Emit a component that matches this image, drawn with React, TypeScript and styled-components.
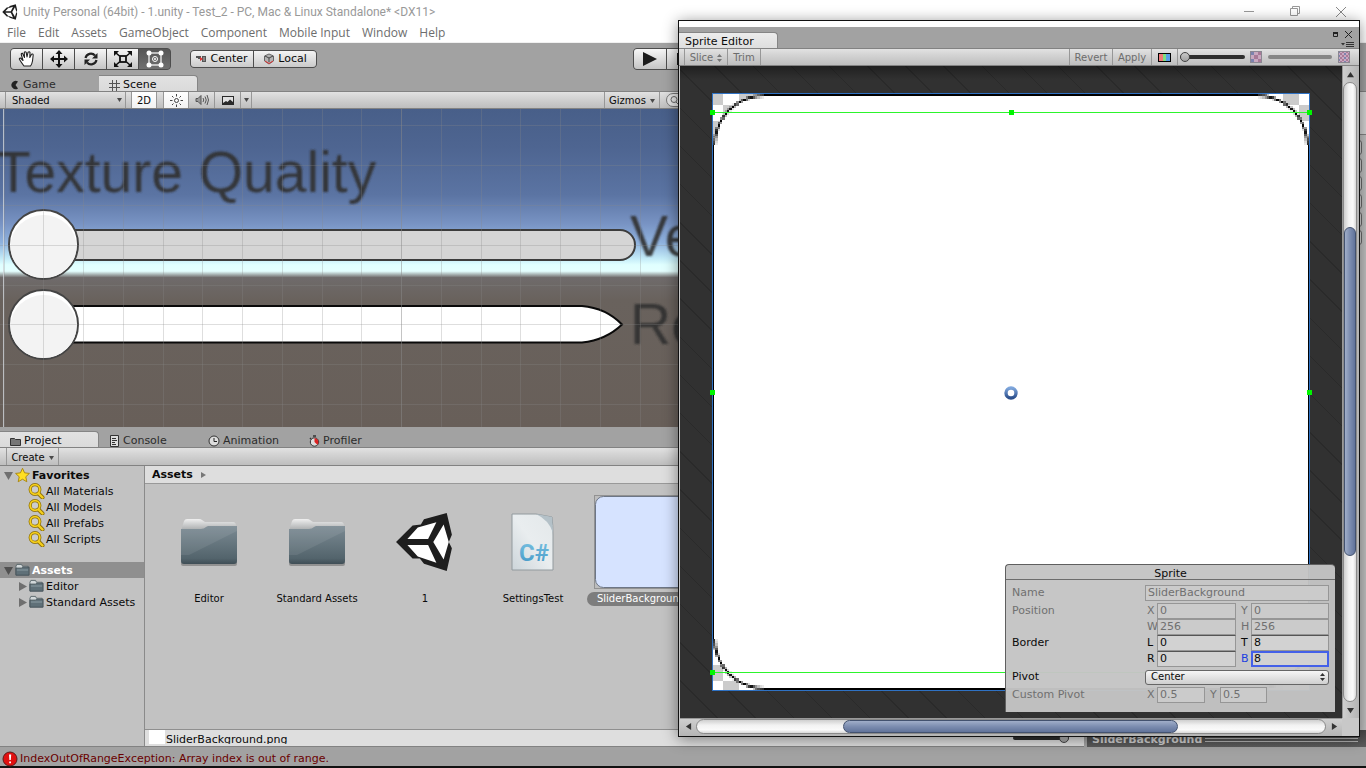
import React from "react";
import styled, { createGlobalStyle, css } from "styled-components";

const GlobalStyle = createGlobalStyle`
  *, *::before, *::after { box-sizing: border-box; }
  body {
    margin: 0;
    background: #a2a2a2;
    color: #0a0a0a;
    font: 11px/16px "DejaVu Sans", Verdana, sans-serif;
    overflow: hidden;
  }
  button, input, select { font: inherit; color: inherit; margin: 0; }
  button { padding: 0; border: 0; background: none; }
  svg { display: block; flex: none; }
`;

const barFill = "linear-gradient(#e2e2e2, #d6d6d6 30%, #bebebe)";

/* ---------- shell ---------- */

const Shell = styled.div`
  position: relative;
  display: flex;
  flex-direction: column;
  min-height: 100vh;
  overflow: hidden;
`;

const TitleBar = styled.header`
  display: flex;
  align-items: center;
  height: 23px;
  padding: 0 2px;
  background: #fff;
  color: #999;
  font: 12px/16px Roboto, "Segoe UI", sans-serif;
`;

const TitleText = styled.h1`
  flex: 1;
  margin: 0 0 0 5px;
  font: inherit;
`;

const CaptionButton = styled.button`
  display: grid;
  place-items: center;
  width: 46px;
  height: 22px;
  color: #999;
`;

const MenuBar = styled.nav`
  display: flex;
  gap: 12px;
  height: 20px;
  padding: 1px 0 1px 7px;
  background: #fff;
  border-bottom: 1px solid #f0f0f0;
  color: #6d6d6d;
  font: 12px/16px "Open Sans", "Segoe UI", sans-serif;
`;

const MainToolbar = styled.div`
  display: grid;
  grid-template-columns: 1fr auto 1fr;
  align-items: center;
  height: 32px;
  padding: 0 10px;
  background: #a2a2a2;
`;

const ToolSide = styled.div`
  display: flex;
  align-items: center;
  gap: 19px;
`;

const ButtonGroup = styled.div`
  display: flex;
  border: 1px solid #4d4d4d;
  border-radius: 4px;
  overflow: hidden;
  background: #4d4d4d;
  gap: 1px;
`;

const ToolButton = styled.button<{ $on?: boolean; $wide?: boolean }>`
  display: grid;
  place-items: center;
  width: ${(p) => (p.$wide ? 32 : 31)}px;
  height: 20px;
  background: ${(p) => (p.$on ? "linear-gradient(#565656, #707070)" : "linear-gradient(#f6f6f6, #c4c4c4)")};
`;

const PivotButton = styled.button`
  display: flex;
  align-items: center;
  justify-content: center;
  gap: 3px;
  width: 62px;
  height: 16px;
  line-height: 16px;
  background: linear-gradient(#f4f4f4, #cacaca);
`;

/* ---------- docks ---------- */

const Workspace = styled.div`
  display: flex;
  flex: 1;
`;

const LeftColumn = styled.div`
  display: flex;
  flex-direction: column;
  flex: 1;
  min-width: 0;
`;

const Dock = styled.section<{ $grow?: boolean }>`
  display: flex;
  flex-direction: column;
  ${(p) => p.$grow && css`flex: 1;`}
`;

const TabStrip = styled.div`
  display: flex;
  align-items: flex-end;
  height: 17px;
  background: #a2a2a2;
  border-bottom: 1px solid #828282;
`;

const DockTab = styled.button<{ $active?: boolean }>`
  display: flex;
  align-items: center;
  gap: 3px;
  width: 99px;
  height: 16px;
  padding: 3px 0 0 10px;
  color: ${(p) => (p.$active ? "#0a0a0a" : "#2c2c2c")};
  line-height: 14px;
  white-space: nowrap;
  ${(p) =>
    p.$active &&
    css`
      background: linear-gradient(#e2e2e2, #dadada);
      border: solid #858585;
      border-width: 1px 1px 0 0;
      border-radius: 0 4px 0 0;
    `}
`;

const Bar = styled.div<{ $indent?: number; $tall?: boolean }>`
  display: flex;
  align-items: stretch;
  height: ${(p) => (p.$tall ? 18 : 17)}px;
  padding-left: ${(p) => p.$indent ?? 5}px;
  background: ${barFill};
  border-bottom: 1px solid #828282;
  font-size: 10px;
  line-height: 14px;
`;

const BarButton = styled.button<{ $width: number; $on?: boolean; $dim?: boolean; $left?: boolean }>`
  display: flex;
  align-items: center;
  justify-content: center;
  gap: 4px;
  width: ${(p) => p.$width}px;
  padding-top: ${(p) => (p["aria-label"] ? 0 : 2)}px;
  border-right: 1px solid #979797;
  ${(p) => p.$left && css`border-left: 1px solid #979797;`}
  ${(p) => p.$on && css`background: linear-gradient(#fff, #f2f2f2);`}
  ${(p) => p.$dim && css`color: #6c6c6c;`}
`;

const Spacer = styled.div<{ $width?: number }>`
  ${(p) => (p.$width ? css`width: ${p.$width}px;` : css`flex: 1;`)}
`;

const SelectBox = styled.div<{ $width?: number }>`
  display: grid;
  align-items: center;
  ${(p) => p.$width && css`width: ${p.$width}px;`}
  > * { grid-area: 1 / 1; }
  > svg { justify-self: end; margin-right: 4px; pointer-events: none; }
`;

const BarSelect = styled.select`
  appearance: none;
  width: 100%;
  height: 16px;
  padding: 1px 0 0 6px;
  border: solid #979797;
  border-width: 0 1px;
  border-radius: 0;
  background: none;
`;

const SearchWrap = styled.div`
  display: flex;
  width: 424px;
  padding: 1px 6px;
`;

const SearchField = styled.input`
  flex: 1;
  min-width: 0;
  height: 14px;
  padding: 0 16px;
  border: 1px solid #777;
  border-radius: 7px;
  background: #e4e4e4;
`;

const SearchGlyph = styled.svg`
  width: 16px;
  margin: 0 -16px 0 0;
  z-index: 1;
`;

const SceneView = styled.div`
  height: 322px;
  overflow: hidden;
  background: #a2a2a2;
`;

/* ---------- project browser ---------- */

const Browser = styled.div`
  display: flex;
  flex: 1;
  border-bottom: 1px solid #828282;
`;

const Tree = styled.ul`
  width: 145px;
  margin: 0;
  padding: 1px 0 0;
  list-style: none;
  background: #c2c2c2;
  border-right: 1px solid #8a8a8a;
`;

const TreeRow = styled.li<{ $depth: number; $head?: boolean; $selected?: boolean; $gap?: boolean }>`
  display: flex;
  align-items: center;
  gap: ${(p) => (p.$head || !p.$depth ? 2 : 1)}px;
  height: 16px;
  margin-top: ${(p) => (p.$gap ? 15 : 0)}px;
  padding-left: ${(p) => (p.$depth ? (p.$head ? 18 : 28) : 4)}px;
  line-height: 17px;
  white-space: nowrap;
  ${(p) => !p.$depth && css`font-weight: bold;`}
  ${(p) => p.$selected && css`background: #8f8f8f; color: #fff;`}
`;

const Listing = styled.div`
  display: flex;
  flex-direction: column;
  flex: 1;
  min-width: 0;
  background: #c2c2c2;
`;

const Crumbs = styled.div`
  display: flex;
  align-items: center;
  gap: 8px;
  height: 18px;
  padding: 1px 0 0 7px;
  background: #dedede;
  border-bottom: 1px solid #999;
  font-weight: bold;
`;

const AssetGrid = styled.div`
  display: flex;
  flex: 1;
  padding: 11px 10px 0;
`;

const Asset = styled.figure`
  display: flex;
  flex-direction: column;
  align-items: center;
  width: 108px;
  margin: 0;
`;

const AssetArt = styled.div`
  display: grid;
  place-items: center;
  width: 94px;
  height: 94px;
`;

const AssetName = styled.figcaption<{ $selected?: boolean }>`
  height: 14px;
  margin-top: 3px;
  padding: 0 10px;
  border-radius: 7px;
  font-size: 10px;
  line-height: 14px;
  white-space: nowrap;
  ${(p) => p.$selected && css`background: #7d7d7d; color: #fff;`}
`;

const PathBar = styled.div`
  display: flex;
  height: 17px;
  padding-left: 4px;
  overflow: hidden;
  background: #dedede;
  border-top: 1px solid #8f8f8f;
`;

const Swatch = styled.span`
  width: 16px;
  height: 14px;
  margin: 0 1px 0 0;
  background: #fff;
`;

const PathText = styled.span`
  flex: 1;
  height: 14px;
  overflow: hidden;
  line-height: 19px;
`;

/* ---------- inspector strip ---------- */

const Inspector = styled.aside`
  display: flex;
  flex-direction: column;
  width: 282px;
  background: #c2c2c2;
  border-left: 3px solid #a2a2a2;
`;

const InspectorHead = styled.div`
  height: 43px;
  background: #d6d6d6;
  border-bottom: 1px solid #858585;
`;

const InspectorRows = styled.div`
  display: flex;
  flex-direction: column;
  gap: 3px;
  flex: 1;
  padding: 5px 4px 0;
`;

const InspectorRow = styled.div`
  height: 15px;
  border: 1px solid #6b6b6b;
  border-radius: 3px;
  background: #d8d8d8;
`;

const PreviewHead = styled.div`
  display: flex;
  align-items: center;
  gap: 3px;
  height: 17px;
  padding: 2px 8px 0 5px;
  background: linear-gradient(#4a4a4a, #5c5c5c);
  color: #d0d0d0;
  font-weight: bold;
`;

const Grip = styled.span`
  flex: 1;
  height: 4px;
  border: solid #b4b4b4;
  border-width: 1px 0;
`;

const StatusBar = styled.footer`
  display: flex;
  align-items: center;
  gap: 1px;
  height: 21px;
  padding: 4px 0 0 2px;
  border-bottom: 2px solid #111;
  background: #a2a2a2;
  color: #6a0000;
  line-height: 17px;
`;

/* ---------- sprite editor window ---------- */

const EditorWindow = styled.section`
  position: absolute;
  z-index: 2;
  top: 20px;
  right: 6px;
  bottom: 31px;
  left: 678px;
  display: flex;
  flex-direction: column;
  border: 1px solid #111;
  background: #c8c8c8;
  box-shadow: 0 2px 14px rgba(0, 0, 0, 0.45);
`;

const WindowTop = styled.div`
  display: flex;
  align-items: flex-end;
  height: 28px;
  padding-right: 1px;
  border-top: 6px solid #fff;
  border-bottom: 1px solid #828282;
  background: #a2a2a2;
`;

const WindowTab = styled.h2`
  width: 99px;
  height: 16px;
  margin: 0;
  padding-left: 6px;
  font: inherit;
  line-height: 17px;
  background: linear-gradient(#ececec, #dedede);
  border: solid #858585;
  border-width: 1px 1px 0 0;
  border-radius: 0 4px 0 0;
`;

const WindowBody = styled.div`
  display: grid;
  flex: 1;
  grid-template: minmax(0, 1fr) 18px / minmax(0, 1fr) 17px;
  padding-left: 1px;
`;

const Stage = styled.div`
  position: relative;
  background:
    linear-gradient(rgba(0, 0, 0, 0.35), transparent 14px),
    repeating-linear-gradient(45deg, #313131 0 26px, #2a2a2a 26px 27px);
`;

const SpriteCanvas = styled.svg`
  position: absolute;
  top: 22px;
  left: 27px;
`;

const Scroll = styled.div<{ $vertical?: boolean }>`
  display: flex;
  flex-direction: ${(p) => (p.$vertical ? "column" : "row")};
  background: ${(p) => (p.$vertical ? "linear-gradient(90deg, #cfcfcf, #b4b4b4)" : "linear-gradient(#cfcfcf, #b4b4b4)")};
  border-${(p) => (p.$vertical ? "left" : "top")}: 1px solid #999;
  padding: ${(p) => (p.$vertical ? "0 2px 0 0" : "0 0 2px")};
`;

const ScrollArrow = styled.button`
  display: grid;
  place-items: center;
  flex: 0 0 16px;
`;

const ScrollTrack = styled.div<{ $vertical?: boolean }>`
  flex: 1;
  display: grid;
  ${(p) => (p.$vertical ? "grid-template-rows" : "grid-template-columns")}: 233fr 533fr 234fr;
  border: 1px solid #8a8a8a;
  border-radius: 8px;
  background: linear-gradient(${(p) => (p.$vertical ? "90deg" : "180deg")}, #cfcfcf, #f2f2f2 40%, #fafafa 75%, #d8d8d8);
`;

const ScrollThumb = styled.div<{ $vertical?: boolean }>`
  grid-area: ${(p) => (p.$vertical ? "2 / 1" : "1 / 2")};
  border: 1px solid #43526f;
  border-radius: 7px;
  background: linear-gradient(${(p) => (p.$vertical ? "90deg" : "180deg")}, #a0aec9, #7c8db0 50%, #61739a);
`;

const Range = styled.input<{ $muted?: boolean; $width: number }>`
  appearance: none;
  align-self: center;
  width: ${(p) => p.$width}px;
  height: 10px;
  background: none;
  &::-webkit-slider-runnable-track {
    height: 4px;
    border-radius: 2px;
    background: ${(p) => (p.$muted ? "#868686" : "#2e2e2e")};
  }
  &::-webkit-slider-thumb {
    appearance: none;
    width: 10px;
    height: 10px;
    margin-top: -3px;
    border: 1px solid #444;
    border-radius: 5px;
    background: linear-gradient(#c8c8c8, #a0a0a0);
    opacity: ${(p) => (p.$muted ? 0 : 1)};
  }
`;

/* ---------- sprite properties ---------- */

const SpritePanel = styled.form`
  position: absolute;
  right: 7px;
  bottom: 6px;
  width: 330px;
  height: 148px;
  border: solid #5f5f5f;
  border-width: 1px 0 0 1px;
  border-radius: 4px 4px 0 0;
  background: rgba(196, 196, 196, 0.97);
`;

const PanelTitle = styled.h3`
  height: 15px;
  margin: 0 0 5px;
  border-bottom: 1px solid #6c6c6c;
  font: inherit;
  line-height: 17px;
  text-align: center;
`;

const PanelRow = styled.div<{ $dim?: boolean; $gap?: boolean; $short?: boolean }>`
  display: grid;
  grid-template-columns: ${(p) => (p.$short ? "133px 12px 48px 15px 47px" : "133px 12px 79px 15px 78px")};
  height: 16px;
  margin: 0 0 ${(p) => (p.$gap ? 2 : 0)}px 6px;
  color: ${(p) => (p.$dim ? "#707070" : "#0a0a0a")};
`;

const AxisLabel = styled.label<{ $second?: boolean; $focus?: boolean }>`
  padding-left: ${(p) => (p.$second ? 5 : 2)}px;
  overflow: hidden;
  ${(p) => p.$focus && css`color: #1c3fe0;`}
`;

const Field = styled.input<{ $wide?: boolean; $focus?: boolean }>`
  ${(p) => p.$wide && css`grid-column: 2 / -1;`}
  min-width: 0;
  width: 100%;
  height: 16px;
  padding: 0 2px;
  border: 1px solid #969696;
  border-top-color: ${(p) => (p.disabled ? "#969696" : "#555")};
  border-radius: 0;
  outline: 0;
  background: #cbcbcb;
  color: inherit;
  ${(p) => !p.disabled && css`background: #d2d2d2;`}
  ${(p) => p.$focus && css`border: 2px solid #4460e8; padding: 0 1px;`}
`;

const PivotSelectBox = styled(SelectBox)`
  grid-column: 2 / -1;
`;

const PivotSelect = styled.select`
  appearance: none;
  width: 100%;
  height: 15px;
  padding: 0 5px;
  border: 1px solid #666;
  border-radius: 3px;
  background: linear-gradient(#f6f6f6, #cfcfcf);
  font-size: 10px;
  line-height: 12px;
`;

/* ---------- icons ---------- */

const Caret = ({ color = "#4a4a4a" }: { color?: string }) => (
  <svg width="5" height="4" viewBox="0 0 5 4"><path d="M0 0h5L2.500 4z" fill={color} /></svg>
);

const UpDown = ({ color = "#333" }: { color?: string }) => (
  <svg width="5" height="8" viewBox="0 0 5 8"><path d="M0 3h5L2.500 0zM0 5h5L2.500 8z" fill={color} /></svg>
);

const UnityLogo = ({ size, lit = "#fff" }: { size: number; lit?: string }) => (
  <svg width={size} height={size} viewBox="0 0 58 58">
    <path d="M1 29 17 13 25 12 28 7 50 1 55 22 52 29 55 35 50 57 28 50 24 45 17 45z" fill="#1e1e1e" />
    <path d="M12 26 22 15 40 10 32 26zM12 32 22 43 40 49 32 32zM37 29 47 12 52 29 47 46z" fill={lit} />
  </svg>
);

const Arrow = ({ dir, size = 7 }: { dir: "up" | "down" | "left" | "right"; size?: number }) => {
  const turn = { up: 0, right: 90, down: 180, left: 270 }[dir];
  return (
    <svg width={size} height={size} viewBox="0 0 8 8">
      <path d="M0 7h8L4 1z" fill="#333" transform={`rotate(${turn} 4 4)`} />
    </svg>
  );
};

const Fold = ({ open, color = "#6f6f6f" }: { open?: boolean; color?: string }) => (
  <svg width="9" height="9" viewBox="0 0 9 9"><path d={open ? "M0 1h9L4.500 9z" : "M1 0v9l8-4.500z"} fill={color} /></svg>
);

const Star = () => (
  <svg width="15" height="16" viewBox="0 0 16 16">
    <path d="M8 .8l2.200 4.900 5.200.6-3.900 3.600 1.100 5.300L8 12.500l-4.600 2.700 1.100-5.300L.6 6.300l5.200-.6z" fill="#ffdf22" stroke="#a98510" />
  </svg>
);

const SavedSearch = () => (
  <svg width="17" height="16" viewBox="0 0 17 16">
    <circle cx="7" cy="6.500" r="4.800" fill="#ccc" stroke="#8a6d08" strokeWidth="3.200" />
    <path d="M10.500 10.500l4 4" stroke="#8a6d08" strokeWidth="4" strokeLinecap="round" />
    <circle cx="7" cy="6.500" r="4.800" fill="none" stroke="#f5cf1c" strokeWidth="1.800" />
    <path d="M10.500 10.500l4 4" stroke="#f5cf1c" strokeWidth="2.400" strokeLinecap="round" />
  </svg>
);

const SmallFolder = () => (
  <svg width="15" height="14" viewBox="0 0 16 14">
    <path d="M1 12V3l1-2h5l1 2h6v9z" fill="#d2d8da" stroke="#5a666b" />
    <path d="M1 5h6l1-1h7v8.500H1z" fill="#5f7078" stroke="#46535a" />
    <path d="M2 7h12" stroke="#8fa0a6" />
  </svg>
);

const BigFolder = () => (
  <svg width="60" height="50" viewBox="0 0 60 50">
    <defs>
      <linearGradient id="folderFront" x1="0" y1="0" x2="0" y2="1">
        <stop offset="0" stopColor="#7b8a93" /><stop offset=".85" stopColor="#53646c" /><stop offset="1" stopColor="#3f4e56" />
      </linearGradient>
      <linearGradient id="folderBack" x1="0" y1="0" x2="0" y2="1">
        <stop offset="0" stopColor="#efefef" /><stop offset=".6" stopColor="#aeb1b2" />
      </linearGradient>
    </defs>
    <rect x="2" y="44" width="56" height="5" rx="2" fill="#000" opacity=".25" />
    <path d="M2 14 5 4q1-2 3-2h12q2 0 3 1l3 2h28q3 0 3 4v10H2z" fill="url(#folderBack)" />
    <path d="M2 12h20q3 0 5-2l2-1h29v35q0 3-3 3H5q-3 0-3-3z" fill="url(#folderFront)" />
    <path d="M2 12h20q3 0 5-2l2-1h29v5L10 38H2z" fill="#fff" opacity=".08" />
  </svg>
);

const ScriptFile = () => (
  <svg width="46" height="60" viewBox="0 0 46 60">
    <defs>
      <linearGradient id="sheet" x1="0" y1="1" x2="1" y2="0">
        <stop offset="0" stopColor="#cdd5da" /><stop offset=".5" stopColor="#e9edef" /><stop offset="1" stopColor="#e3e8ea" />
      </linearGradient>
      <linearGradient id="ink" x1="0" y1="0" x2="0" y2="1">
        <stop offset="0" stopColor="#7cc3e2" /><stop offset="1" stopColor="#3f95c5" />
      </linearGradient>
    </defs>
    <path d="M2 2h24l16 3q1 8 1 18v35H2z" fill="url(#sheet)" stroke="#929a9e" />
    <path d="M26 2l16 3 1 16Q39 8 26 2z" fill="#b4c1c8" />
    <text x="9" y="49" fontFamily="Roboto, sans-serif" fontWeight="bold" fontSize="24" fill="url(#ink)">C#</text>
  </svg>
);

const CornerThumb = () => (
  <svg width="94" height="94" viewBox="0 0 94 94">
    <rect x=".5" y=".5" width="93" height="93" fill="#bdbdbd" stroke="#929292" />
    <rect x="1.500" y="1.500" width="91" height="91" rx="8" fill="#d6e3ff" stroke="#6d7686" />
  </svg>
);

const HandIcon = () => (
  <svg width="18" height="18" viewBox="0 0 18 18" fill="#fff" stroke="#222" strokeWidth="1.100" strokeLinejoin="round">
    <path d="M6 16Q3 12 1.500 9.500 1 8 2.500 8L5 10.500 3.300 4.500Q3.200 3 4.500 3.200L6.500 7.500 6.300 2.500Q7 1 8.200 2.300L9 7 10 2.300Q11.300 1 12 2.500L11.800 7.500 13.500 4.300Q15 3.500 15.200 5L14.500 11Q14 14 12.500 16z" />
  </svg>
);

const MoveIcon = () => (
  <svg width="18" height="18" viewBox="0 0 18 18" fill="#111">
    <path d="M9 0l3.500 4H10v4h4V5.500L18 9l-4 3.500V10h-4v4h2.500L9 18l-3.500-4H8v-4H4v2.500L0 9l4-3.500V8h4V4H5.500z" />
  </svg>
);

const RotateIcon = () => (
  <svg width="16" height="16" viewBox="0 0 16 16">
    <path d="M2.500 7A5.500 5.500 0 0 1 12 4.500M13.500 9A5.500 5.500 0 0 1 4 11.500" fill="none" stroke="#222" strokeWidth="2.200" />
    <path d="M14.500 2v5.500H9zM1.500 14V8.500H7z" fill="#222" />
  </svg>
);

const ScaleIcon = () => (
  <svg width="18" height="18" viewBox="0 0 18 18">
    <rect x="6" y="6" width="6" height="6" fill="none" stroke="#111" strokeWidth="1.800" />
    <path d="M2 3l3.500 3M16 3l-3.500 3M2 15l3.500-3M16 15l-3.500-3" stroke="#111" strokeWidth="1.600" />
    <path d="M0 1h5L0 6zM18 1h-5l5 5zM0 17h5l-5-5zM18 17h-5l5-5z" fill="#111" />
  </svg>
);

const RectIcon = () => (
  <svg width="18" height="18" viewBox="0 0 18 18">
    <rect x="3" y="3" width="12" height="12" fill="none" stroke="#fff" strokeWidth="1.200" />
    <g fill="#fff"><circle cx="3" cy="3" r="2.500" /><circle cx="15" cy="3" r="2.500" /><circle cx="3" cy="15" r="2.500" /><circle cx="15" cy="15" r="2.500" /></g>
    <circle cx="9" cy="9" r="2.500" fill="none" stroke="#fff" /><circle cx="9" cy="9" r="1" fill="#fff" />
  </svg>
);

const CenterIcon = () => (
  <svg width="11" height="8" viewBox="0 0 11 8">
    <path d="M0 1h5v3H2V3H0z" fill="#555" /><rect x="6.500" y="1.500" width="3" height="5" fill="#888" stroke="#555" /><path d="M4 2v4l3-2z" fill="#d33" />
  </svg>
);

const LocalIcon = () => (
  <svg width="12" height="12" viewBox="0 0 12 12" fill="none" stroke="#666">
    <path d="M6 1l4.500 2v5L6 11 1.500 8V3z" fill="#b4b4b4" /><path d="M2 3l4 2 4-2M6 5v4" stroke="#444" /><path d="M2 8l4 2.500L10 8" stroke="#d33" />
  </svg>
);

const checker = (n: number) => (
  <svg width="12" height="12" viewBox="0 0 12 12">
    <rect width="12" height="12" fill="#c9a9c0" />
    {Array.from({ length: n * n }, (_, i) => {
      const s = 12 / n;
      const x = i % n;
      const y = Math.floor(i / n);
      return (x + y) % 2 ? null : <rect key={i} x={x * s} y={y * s} width={s} height={s} fill={x % 3 ? "#a87a98" : "#7d83ae"} />;
    })}
    <rect x=".5" y=".5" width="11" height="11" fill="none" stroke="#8b8792" />
  </svg>
);

/* ---------- scene drawing ---------- */

const gridX = Array.from({ length: 27 }, (_, i) => Math.round(3.5 + i * 39.75));
const gridY = [16, 56, 96, 136, 176, 215, 255, 295];

const Knob = ({ cy }: { cy: number }) => (
  <>
    <circle cx="43.500" cy={cy} r="34.500" fill="#fff" stroke="#444" strokeWidth="2" />
    <ellipse cx="43.500" cy={cy + 2} rx="33" ry="31.500" fill="#f3f3f3" />
  </>
);

const Scene = () => (
  <svg width="1084" height="318" viewBox="0 0 1084 318">
    <defs>
      <linearGradient id="sky" x1="0" y1="0" x2="0" y2="1">
        <stop offset="0" stopColor="#485f89" />
        <stop offset=".12" stopColor="#4e6591" />
        <stop offset=".27" stopColor="#5b74a3" />
        <stop offset=".36" stopColor="#7893c3" />
        <stop offset=".42" stopColor="#8fb2de" />
        <stop offset=".47" stopColor="#c3ebf8" />
        <stop offset=".49" stopColor="#e0ffff" />
        <stop offset=".51" stopColor="#e4ffff" />
        <stop offset=".53" stopColor="#6f6b6b" />
        <stop offset=".6" stopColor="#69625d" />
        <stop offset="1" stopColor="#685f59" />
      </linearGradient>
      <filter id="soft"><feGaussianBlur stdDeviation="0.9" /></filter>
    </defs>
    <rect width="1084" height="318" fill="url(#sky)" />
    <g fontFamily="'Liberation Sans', Arial, sans-serif" fontSize="57" fill="#323232" fillOpacity=".92" filter="url(#soft)">
      <text x="-4" y="83">Texture Quality</text>
      <text x="630" y="147">Vertical</text>
      <text x="630" y="235">Resolution</text>
    </g>
    <rect x="43" y="121" width="592" height="30" rx="15" fill="#d5d5d5" stroke="#3c3c3c" strokeWidth="2" />
    <path d="M43 197H582Q606 199 622 215.500 606 231 582 233.500H43z" fill="#fff" stroke="#0a0a0a" strokeWidth="2" />
    <Knob cy={135.5} />
    <Knob cy={215.5} />
    <g stroke="#8a8a8a" strokeOpacity=".28" shapeRendering="crispEdges">
      {gridX.map((x) => <path key={x} d={`M${x}.5 0V318`} strokeOpacity={x === 401 ? 0.5 : undefined} />)}
      {gridY.map((y) => <path key={y} d={`M0 ${y}.5H1084`} />)}
    </g>
    <path d="M3.500 0V318" stroke="#cfd4da" strokeOpacity=".8" />
  </svg>
);

/* ---------- sprite drawing ---------- */

const TEXELS = 256;
const SPAN = 597;
const RADIUS = 22;
const RING = 21.3;
const edge = (i: number) => 6 + Math.round((i * (SPAN - 1)) / TEXELS);

const cornerTexels: { x: number; y: number; ink: number; inside: boolean }[] = [];
for (let y = 0; y < RADIUS; y++) {
  for (let x = 0; x < RADIUS; x++) {
    const d = Math.hypot(RADIUS - x - 0.5, RADIUS - y - 0.5);
    const ink = Math.max(0, 1 - Math.abs(d - RING) * 1.15);
    const inside = d < RING;
    if (ink > 0 || inside) cornerTexels.push({ x, y, ink, inside });
  }
}

const Corner = ({ flipX, flipY }: { flipX?: boolean; flipY?: boolean }) => (
  <>
    {cornerTexels.map(({ x, y, ink, inside }) => {
      const cx = flipX ? TEXELS - 1 - x : x;
      const cy = flipY ? TEXELS - 1 - y : y;
      const box = { x: edge(cx), y: edge(cy), width: edge(cx + 1) - edge(cx), height: edge(cy + 1) - edge(cy) };
      const shade = Math.round(255 * (1 - ink));
      return inside ? (
        <rect key={`${x}-${y}`} {...box} fill={`rgb(${shade},${shade},${shade})`} />
      ) : (
        <rect key={`${x}-${y}`} {...box} fill="#000" fillOpacity={ink} />
      );
    })}
  </>
);

const handles = [[5, 24], [304, 24], [602, 24], [5, 304], [602, 304], [5, 584], [304, 584], [602, 584]];

const SpriteDrawing = () => {
  const near = edge(RADIUS);
  const far = edge(TEXELS - RADIUS);
  const end = edge(TEXELS);
  return (
    <SpriteCanvas width="608" height="608" viewBox="0 0 608 608" shapeRendering="crispEdges">
      <defs>
        <pattern id="checks" x="0" y="1" width="32" height="32" patternUnits="userSpaceOnUse">
          <rect width="32" height="32" fill="#fff" />
          <path d="M0 0h16v16H0zM16 16h16v16H16z" fill="#cbcbcb" />
        </pattern>
        <linearGradient id="pivot" x1="0" y1="0" x2="0" y2="1">
          <stop offset="0" stopColor="#7ea6dc" /><stop offset="1" stopColor="#2c4f8c" />
        </linearGradient>
      </defs>
      <rect x="5" y="5" width="598" height="598" fill="#2f72c4" />
      <rect x="6" y="6" width="596" height="596" fill="url(#checks)" />
      <path d={`M${near} 6H${far}V${end}H${near}zM6 ${near}H${end}V${far}H6z`} fill="#fff" />
      <path d={`M${near} 6H${far}v2H${near}zM${near} ${end - 2}H${far}v2H${near}zM6 ${near}h1V${far}H6zM${end - 1} ${near}h1V${far}h-1z`} fill="#000" />
      <Corner /><Corner flipX /><Corner flipY /><Corner flipX flipY />
      <path d="M5 24.500H603M5 584.500H603" stroke="#2cf52c" />
      {handles.map(([x, y]) => <rect key={`${x}-${y}`} x={x - 2} y={y - 2} width="5" height="5" fill="#00f500" />)}
      <g shapeRendering="auto">
        <circle cx="304" cy="305" r="5" fill="#fff" stroke="url(#pivot)" strokeWidth="3.400" />
      </g>
    </SpriteCanvas>
  );
};

/* ---------- data ---------- */

const menus = ["File", "Edit", "Assets", "GameObject", "Component", "Mobile Input", "Window", "Help"];
const favorites = ["All Materials", "All Models", "All Prefabs", "All Scripts"];
const folders = ["Editor", "Standard Assets"];
const assets = [
  { name: "Editor", art: <BigFolder /> },
  { name: "Standard Assets", art: <BigFolder /> },
  { name: "1", art: <UnityLogo size={60} /> },
  { name: "SettingsTest", art: <ScriptFile /> },
  { name: "SliderBackground", art: <CornerThumb />, selected: true },
];

type Pair = { label?: string; dim?: boolean; gap?: boolean; short?: boolean; a: [string, string]; b: [string, string]; focus?: boolean };
const positionRows: Pair[] = [
  { label: "Position", dim: true, a: ["X", "0"], b: ["Y", "0"] },
  { dim: true, a: ["W", "256"], b: ["H", "256"] },
  { label: "Border", a: ["L", "0"], b: ["T", "8"] },
  { gap: true, a: ["R", "0"], b: ["B", "8"], focus: true },
];

const PairRow = ({ label, dim, gap, short, a, b, focus }: Pair) => {
  const id = `${label ?? ""}${a[0]}${b[0]}`.replace(/\s/g, "");
  return (
    <PanelRow $dim={dim} $gap={gap} $short={short}>
      <span>{label}</span>
      <AxisLabel htmlFor={`${id}a`}>{a[0]}</AxisLabel>
      <Field id={`${id}a`} defaultValue={a[1]} disabled={dim} />
      <AxisLabel $second $focus={focus} htmlFor={`${id}b`}>{b[0]}</AxisLabel>
      <Field id={`${id}b`} defaultValue={b[1]} disabled={dim} $focus={focus} />
    </PanelRow>
  );
};

export default function App() {
  return (
    <>
      <GlobalStyle />
      <Shell>
        <TitleBar>
          <UnityLogo size={16} />
          <TitleText>Unity Personal (64bit) - 1.unity - Test_2 - PC, Mac &amp; Linux Standalone* &lt;DX11&gt;</TitleText>
          <CaptionButton aria-label="Minimize"><svg width="10" height="10"><path d="M0 4.500h10" stroke="#999" /></svg></CaptionButton>
          <CaptionButton aria-label="Restore"><svg width="11" height="11" fill="none" stroke="#999"><path d="M.5 2.500h7v7h-7zM2.500 2.500v-2h7v7h-2" /></svg></CaptionButton>
          <CaptionButton aria-label="Close"><svg width="10" height="10"><path d="M0 0l10 10M10 0L0 10" stroke="#888" /></svg></CaptionButton>
        </TitleBar>
        <MenuBar>{menus.map((m) => <button key={m}>{m}</button>)}</MenuBar>

        <MainToolbar>
          <ToolSide>
            <ButtonGroup>
              <ToolButton aria-label="Hand"><HandIcon /></ToolButton>
              <ToolButton aria-label="Move"><MoveIcon /></ToolButton>
              <ToolButton aria-label="Rotate"><RotateIcon /></ToolButton>
              <ToolButton aria-label="Scale"><ScaleIcon /></ToolButton>
              <ToolButton aria-label="Rect" $on><RectIcon /></ToolButton>
            </ButtonGroup>
            <ButtonGroup>
              <PivotButton><CenterIcon />Center</PivotButton>
              <PivotButton><LocalIcon />Local</PivotButton>
            </ButtonGroup>
          </ToolSide>
          <ButtonGroup>
            <ToolButton $wide aria-label="Play"><svg width="16" height="14"><path d="M1 0v14l14-7z" fill="#1c1c1c" /></svg></ToolButton>
            <ToolButton $wide aria-label="Pause"><svg width="12" height="12"><path d="M0 0h3v12H0zM8 0h3v12H8z" fill="#1c1c1c" /></svg></ToolButton>
            <ToolButton $wide aria-label="Step"><svg width="12" height="12"><path d="M0 0v12l8-6zM9 0h3v12H9z" fill="#1c1c1c" /></svg></ToolButton>
          </ButtonGroup>
        </MainToolbar>

        <Workspace>
          <LeftColumn>
            <Dock>
              <TabStrip>
                <DockTab><svg width="10" height="10" viewBox="0 0 10 10"><path d="M8 1.500A4.200 4.200 0 1 0 8 8.500L5.500 5z" fill="#222" /></svg>Game</DockTab>
                <DockTab $active><svg width="11" height="11" viewBox="0 0 11 11"><path d="M3.500 0v11M7.500 0v11M0 3.500h11M0 7.500h11" stroke="#555" fill="none" /></svg>Scene</DockTab>
              </TabStrip>
              <Bar>
                <SelectBox $width={121}>
                  <BarSelect aria-label="Draw mode"><option>Shaded</option></BarSelect>
                  <Caret />
                </SelectBox>
                <Spacer $width={5} />
                <BarButton $width={26} $on $left>2D</BarButton>
                <Spacer $width={6} />
                <BarButton $width={26} $on $left aria-label="Lighting">
                  <svg width="13" height="13" viewBox="0 0 13 13" fill="none" stroke="#444"><circle cx="6.500" cy="6.500" r="2" /><path d="M6.500 0v2.500M6.500 10.500V13M0 6.500h2.500M10.500 6.500H13M2 2l1.500 1.500M9.500 9.500L11 11M11 2L9.500 3.500M3.500 9.500L2 11" /></svg>
                </BarButton>
                <BarButton $width={26} aria-label="Audio">
                  <svg width="14" height="12" viewBox="0 0 14 12" fill="none" stroke="#555"><path d="M1 4.500h2l3-3v9l-3-3H1z" fill="#999" /><path d="M8 4q1.500 2 0 4M10 2.500q2.500 3.500 0 7M12 1q3 5 0 10" /></svg>
                </BarButton>
                <BarButton $width={26} aria-label="Effects">
                  <svg width="12" height="9" viewBox="0 0 12 9"><rect width="12" height="9" fill="#2a2a2a" /><path d="M1 1h10v5L8 3.500 5.500 6 4 5 1 7z" fill="#e2e2e2" /></svg>
                </BarButton>
                <BarButton $width={11} aria-label="Effects menu"><Caret /></BarButton>
                <Spacer />
                <BarButton $width={56} $left>Gizmos<Caret /></BarButton>
                <SearchWrap>
                  <SearchGlyph height="14" viewBox="0 0 16 14"><circle cx="8" cy="6.500" r="3" fill="none" stroke="#666" /><path d="M10 9l3 3" stroke="#666" /></SearchGlyph>
                  <SearchField aria-label="Search scene" />
                </SearchWrap>
              </Bar>
              <SceneView><Scene /></SceneView>
            </Dock>

            <Dock $grow>
              <TabStrip>
                <DockTab $active><svg width="11" height="9" viewBox="0 0 11 9"><path d="M.5 8.500v-7h4l1 1h5v6z" fill="#777" stroke="#333" /></svg>Project</DockTab>
                <DockTab><svg width="11" height="12" viewBox="0 0 11 12"><path d="M1.500.5h8v11h-8z" fill="#ddd" stroke="#333" /><path d="M3 3.500h4M3 5.500h5M3 7.500h3M3 9.500h4" stroke="#333" /></svg>Console</DockTab>
                <DockTab><svg width="12" height="12" viewBox="0 0 12 12"><circle cx="6" cy="6" r="5" fill="#ddd" stroke="#333" /><path d="M6 3v3.500h3" stroke="#222" fill="none" /></svg>Animation</DockTab>
                <DockTab><svg width="13" height="12" viewBox="0 0 13 12"><circle cx="7.500" cy="7" r="4.200" fill="#ddd" stroke="#333" /><path d="M7.500 7V3a4 4 0 0 1 2.800 6.800z" fill="#d22" /><path d="M6 1h3M3 3l1 1" stroke="#333" strokeWidth="1.500" /></svg>Profiler</DockTab>
              </TabStrip>
              <Bar $indent={6} $tall>
                <BarButton $width={53} $left>Create<Caret /></BarButton>
              </Bar>
              <Browser>
                <Tree>
                  <TreeRow $depth={0}><Fold open /><Star />Favorites</TreeRow>
                  {favorites.map((f) => <TreeRow key={f} $depth={1}><SavedSearch />{f}</TreeRow>)}
                  <TreeRow $depth={0} $selected $gap><Fold open color="#505050" /><SmallFolder />Assets</TreeRow>
                  {folders.map((f) => <TreeRow key={f} $depth={1} $head><Fold /><SmallFolder />{f}</TreeRow>)}
                </Tree>
                <Listing>
                  <Crumbs>Assets<svg width="5" height="6"><path d="M0 0v6l5-3z" fill="#777" /></svg></Crumbs>
                  <AssetGrid>
                    {assets.map((a) => (
                      <Asset key={a.name}>
                        <AssetArt>{a.art}</AssetArt>
                        <AssetName $selected={a.selected}>{a.name}</AssetName>
                      </Asset>
                    ))}
                  </AssetGrid>
                  <PathBar>
                    <Swatch />
                    <PathText>SliderBackground.png</PathText>
                    <Range type="range" aria-label="Icon size" $width={56} defaultValue={100} />
                    <Spacer $width={15} />
                  </PathBar>
                </Listing>
              </Browser>
            </Dock>
          </LeftColumn>

          <Inspector>
            <TabStrip />
            <InspectorHead />
            <InspectorRows>{[0, 1, 2, 3, 4, 5].map((i) => <InspectorRow key={i} />)}</InspectorRows>
            <PreviewHead>SliderBackground<Grip /></PreviewHead>
          </Inspector>
        </Workspace>

        <StatusBar>
          <svg width="17" height="16" viewBox="0 0 17 16"><circle cx="8" cy="8" r="7" fill="#e01010" stroke="#5a1a1a" /><path d="M7 3.500h2.200L8.800 9H7.400zM7.200 10.500h1.800v1.800H7.200z" fill="#fff" /></svg>
          IndexOutOfRangeException: Array index is out of range.
        </StatusBar>

        <EditorWindow>
          <WindowTop>
            <WindowTab>Sprite Editor</WindowTab>
            <Spacer />
            <svg width="32" height="20" viewBox="0 0 32 20">
              <path d="M7.500 5.500h4v3h-4z" fill="none" stroke="#222" /><path d="M7 5h5" stroke="#222" strokeWidth="2" />
              <path d="M19 3l7 7M26 3l-7 7" stroke="#222" />
              <path d="M15 15h4l-2 2.500z" fill="#333" /><path d="M20 14.500h8M20 16.500h8M20 18.500h8" stroke="#333" />
            </svg>
          </WindowTop>
          <Bar>
            <BarButton $width={44} $left $dim>Slice<UpDown color="#777" /></BarButton>
            <BarButton $width={33} $dim>Trim</BarButton>
            <Spacer />
            <BarButton $width={44} $left $dim>Revert</BarButton>
            <BarButton $width={39} $dim>Apply</BarButton>
            <BarButton $width={26} aria-label="Channels">
              <svg width="13" height="9" viewBox="0 0 13 9"><path d="M1 1h4v7H1z" fill="#f07878" /><path d="M5 1h3v7H5z" fill="#7fe07f" /><path d="M8 1h4v7H8z" fill="#5a9ee8" /><rect x=".5" y=".5" width="12" height="8" fill="none" stroke="#000" /></svg>
            </BarButton>
            <Spacer $width={2} />
            <Range type="range" aria-label="Zoom" $width={65} defaultValue={0} />
            <Spacer $width={5} />
            <SelectBox>{checker(3)}</SelectBox>
            <Spacer $width={2} />
            <Range type="range" aria-label="Mip level" $width={64} $muted disabled defaultValue={0} />
            <Spacer $width={6} />
            <SelectBox>{checker(6)}</SelectBox>
            <Spacer $width={5} />
          </Bar>
          <WindowBody>
            <Stage>
              <SpriteDrawing />
              <SpritePanel>
                <PanelTitle>Sprite</PanelTitle>
                <PanelRow $dim $gap>
                  <label htmlFor="name">Name</label>
                  <Field id="name" $wide disabled defaultValue="SliderBackground" />
                </PanelRow>
                {positionRows.map((r) => <PairRow key={r.a[0]} {...r} />)}
                <PanelRow $gap>
                  <label htmlFor="pivot-mode">Pivot</label>
                  <PivotSelectBox>
                    <PivotSelect id="pivot-mode"><option>Center</option></PivotSelect>
                    <UpDown />
                  </PivotSelectBox>
                </PanelRow>
                <PairRow label="Custom Pivot" dim short a={["X", "0.5"]} b={["Y", "0.5"]} />
              </SpritePanel>
            </Stage>
            <Scroll $vertical>
              <ScrollArrow aria-label="Scroll up"><Arrow dir="up" /></ScrollArrow>
              <ScrollTrack $vertical><ScrollThumb $vertical /></ScrollTrack>
              <ScrollArrow aria-label="Scroll down"><Arrow dir="down" /></ScrollArrow>
            </Scroll>
            <Scroll>
              <ScrollArrow aria-label="Scroll left"><Arrow dir="left" /></ScrollArrow>
              <ScrollTrack><ScrollThumb /></ScrollTrack>
              <ScrollArrow aria-label="Scroll right"><Arrow dir="right" /></ScrollArrow>
            </Scroll>
          </WindowBody>
        </EditorWindow>
      </Shell>
    </>
  );
}
